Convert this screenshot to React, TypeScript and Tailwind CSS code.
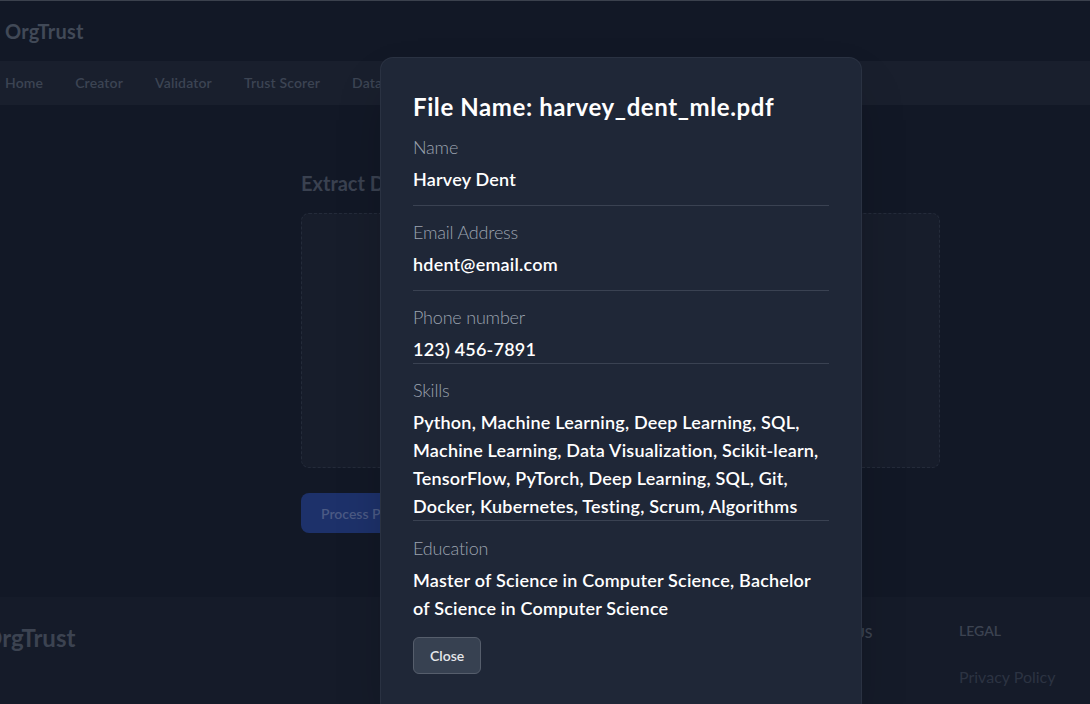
import React from 'react';

const fields = [
  { label: 'Name', value: 'Harvey Dent', pad: 'pb-[12px] border-b' },
  { label: 'Email Address', value: 'hdent@email.com', pad: 'pb-[12px] border-b' },
  { label: 'Phone number', value: '123) 456-7891', pad: 'border-b' },
  {
    label: 'Skills',
    value:
      'Python, Machine Learning, Deep Learning, SQL, Machine Learning, Data Visualization, Scikit-learn, TensorFlow, PyTorch, Deep Learning, SQL, Git, Docker, Kubernetes, Testing, Scrum, Algorithms',
    pad: 'border-b',
  },
  {
    label: 'Education',
    value: 'Master of Science in Computer Science, Bachelor of Science in Computer Science',
    pad: 'pt-[1px]',
  },
];

const navItems = ['Home', 'Creator', 'Validator', 'Trust Scorer', 'Data Explorer'];

export default function App() {
  return (
    <div className="relative h-[704px] w-[1090px] overflow-hidden bg-[#121826] font-['Lato','Open_Sans',sans-serif] border-t border-[#3b414d]">
      {/* Header */}
      <header className="h-[60px] flex items-center pl-[5px]">
        <span className="text-[20px] font-bold text-[#414957] tracking-[0.2px]">OrgTrust</span>
      </header>

      {/* Nav */}
      <nav className="h-[44px] bg-[#191f2d] flex items-center gap-8 pl-[5px] pb-[2px]">
        {navItems.map((item) => (
          <span key={item} className="text-[14px] font-semibold text-[#3c4453] tracking-[0.15px]">
            {item}
          </span>
        ))}
      </nav>

      {/* Main */}
      <main className="h-[492px] pl-[301px] pt-[65px]">
        <h2 className="text-[20px] font-bold text-[#3a4150] leading-[26px]">Extract Data from PDF</h2>
        <div className="mt-[17px] w-[639px] h-[255px] rounded-lg border border-dashed border-[#242b3a] bg-[#171d2b]" />
        <button className="mt-[25px] h-[40px] px-5 rounded-lg bg-[#1d316a] text-[14px] font-semibold text-[#4b5a84]">
          Process PDF
        </button>
      </main>

      {/* Footer */}
      <footer className="h-[110px] bg-[#151b29] flex pt-[23px]">
        <div className="w-[803px] -ml-[17px]">
          <span className="text-[24px] font-bold text-[#3c4351]">OrgTrust</span>
        </div>
        <div className="w-[173px]">
          <span className="text-[14px] font-semibold text-[#3c4351] uppercase">Contact Us</span>
        </div>
        <div className="flex flex-col gap-[24px]">
          <span className="text-[14px] font-semibold text-[#3c4351] uppercase">Legal</span>
          <span className="text-[16px] text-[#2c3342]">Privacy Policy</span>
        </div>
      </footer>

      {/* Modal */}
      <div className="absolute left-[381px] top-[57px] w-[480px] rounded-xl bg-[#1f2737] ring-1 ring-[#2a3242] shadow-2xl px-8 pt-[31px] pb-10">
        <h3 className="text-[24px] font-bold text-white leading-9 tracking-[0.6px]">File Name: harvey_dent_mle.pdf</h3>
        <div className="mt-[8px] flex flex-col gap-[12px]">
          {fields.map((f) => (
            <div key={f.label} className={`${f.pad} border-[#3a4252]`}>
              <p className="text-[18px] font-light text-[#9ca3af] leading-7 tracking-[-0.2px]">{f.label}</p>
              <p className="mt-[4px] text-[18px] font-semibold text-white leading-7 tracking-[0.2px]">{f.value}</p>
            </div>
          ))}
        </div>
        <button className="mt-[15px] h-[37px] px-4 rounded-md bg-[#374151] border border-[#565e6c] text-[14px] font-semibold text-[#e5e7eb]">
          Close
        </button>
      </div>
    </div>
  );
}
